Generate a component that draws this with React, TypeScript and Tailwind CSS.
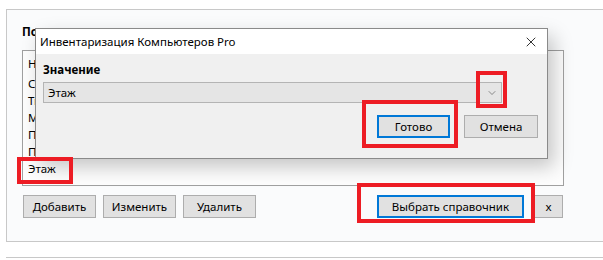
import { X, ChevronDown } from 'lucide-react'

const items = ['Номер', 'Сотрудник', 'Тип', 'Модель', 'Помещение', 'Подразделение']

function WinButton({ label, width, focused }: { label: string; width: string; focused?: boolean }) {
  return (
    <div
      className={`${width} h-[23px] flex items-center justify-center bg-[#e1e1e1] text-[11.5px] text-black ${
        focused ? 'border-2 border-[#0078d7]' : 'border border-[#adadad]'
      }`}
    >
      {label}
    </div>
  )
}

export default function App() {
  return (
    <div
      className="relative w-[603px] h-[260px] overflow-hidden bg-white text-black"
      style={{ fontFamily: '"Noto Sans", "Open Sans", sans-serif' }}
    >
      {/* Main group box */}
      <div className="ml-[6px] mt-[9px] h-[233px] border border-r-0 border-[#c8c8c8] bg-[#fafbfc] pl-[15px] pt-[14px]">
        <div className="text-[11.5px] font-bold leading-[16px]">Помещения</div>
        <div className="mt-[10px] w-[542px] h-[136px] border border-[#a0a0a0] bg-[#fdfdfd] pl-[5px] pt-[4px] text-[11.5px] leading-[17px]">
          <div className="mb-[3px]">{items[0]}</div>
          {items.slice(1).map((t) => (
            <div key={t}>{t}</div>
          ))}
          <div>Этаж</div>
        </div>
        <div className="mt-[9px] flex items-center">
          <div className="ml-[1px] flex gap-[7px]">
            <WinButton label="Добавить" width="w-[73px]" />
            <WinButton label="Изменить" width="w-[73px]" />
            <div>
              <WinButton label="Удалить" width="w-[73px]" />
            </div>
          </div>
          <div className="ml-[121px]">
            <WinButton label="Выбрать справочник" width="w-[147px]" focused />
          </div>
          <div className="ml-[10px]">
            <WinButton label="x" width="w-[29px]" />
          </div>
        </div>
      </div>
      <div className="ml-[6px] mt-[15px] border-t border-[#c8c8c8]" />

      {/* Dialog */}
      <div className="absolute left-[35px] top-[28px] w-[513px] h-[131px] border border-[#8a8a8a] bg-[#f0f0f0] shadow-[6px_8px_18px_rgba(0,0,0,0.22)] flex flex-col">
        <div className="h-[25px] bg-white flex items-center justify-between pl-[4px] pr-[8px]">
          <span className="text-[11.5px]">Инвентаризация Компьютеров Pro</span>
          <X size={16} strokeWidth={1.2} className="text-black" />
        </div>
        <div className="pl-[7px] pr-[9px] pt-[8px] flex flex-col">
          <div className="text-[11.5px] font-bold leading-[16px]">Значение</div>
          <div className="mt-[4px] w-[459px] h-[21px] border border-[#b4b4b4] bg-[#e5e5e5] flex items-center justify-between pl-[4px] pr-[3px]">
            <span className="text-[11.5px]">Этаж</span>
            <ChevronDown size={12} strokeWidth={1.3} className="text-[#555]" />
          </div>
          <div className="mt-[12px] flex justify-end gap-[14px]">
            <WinButton label="Готово" width="w-[73px]" focused />
            <WinButton label="Отмена" width="w-[74px]" />
          </div>
        </div>
      </div>

      {/* Red highlight boxes */}
      <div className="absolute left-[17px] top-[157px] w-[56px] h-[27px] border-4 border-[#ed1c24]" />
      <div className="absolute left-[476px] top-[71px] w-[31px] h-[37px] border-4 border-[#ed1c24]" />
      <div className="absolute left-[362px] top-[100px] w-[96px] h-[48px] border-4 border-[#ed1c24]" />
      <div className="absolute left-[357px] top-[183px] w-[178px] h-[40px] border-4 border-[#ed1c24]" />
    </div>
  )
}
